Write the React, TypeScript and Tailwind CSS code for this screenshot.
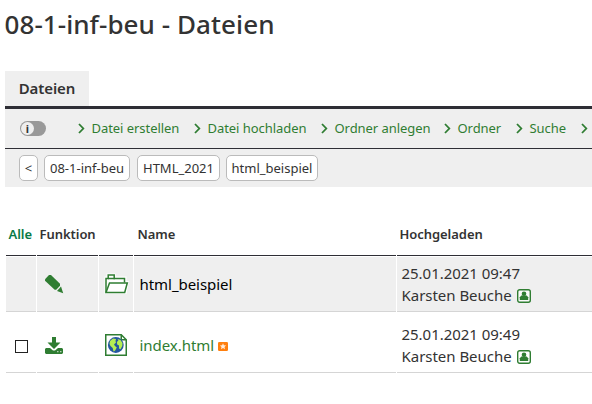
import type { ReactNode } from "react";

const Chevron = () => (
  <svg className="h-[11px] w-[7px] shrink-0" viewBox="0 0 7 11" fill="none" stroke="#2f7d32" strokeWidth="1.8">
    <path d="M1 1l4.3 4.5L1 10" />
  </svg>
);

const Pencil = () => (
  <svg className="h-[19px] w-[19px]" viewBox="0 0 19 19" fill="#2f7d32">
    <path d="M0 4.200L4 0h2L15 8.800v2L11.200 14.800h-1.500L0 5.800z" />
    <path d="M16 11.600l2.200 6.600-6.200-2.200z" />
  </svg>
);

const Download = () => (
  <svg className="h-[17px] w-[18px]" viewBox="0 0 18 17" fill="#2f7d32">
    <path d="M7 0h4v5.500h4.500L9 12 2.500 5.500H7z" />
    <path d="M1 11h4l3 2.500h2l3-2.500h4l1 1v4l-1 1H1l-1-1v-4z" />
    <path fill="#fff" d="M12 14h1.500v1.300H12zM15 14h1.500v1.300H15z" opacity=".65" />
  </svg>
);

const Folder = () => (
  <svg className="h-[22px] w-[25px]" viewBox="0 0 25 22">
    <path d="M.5 21V3.500h2V.5h9v3h11v4.500h2.500L22.500 21z" fill="#fff" />
    <path d="M2 19.500V5.500h2.200V2h6v3.500H20.500V9.500" fill="none" stroke="#2f7d32" strokeWidth="1.500" />
    <path d="M2 19.500L5.500 10H23.300L20.700 19.500zM4 5.500h7" fill="none" stroke="#2f7d32" strokeWidth="1.500" />
  </svg>
);

const Globe = () => (
  <svg className="h-[22px] w-[22px]" viewBox="0 0 22 22">
    <path d="M.75.75h15.500l5 5v15.500H.75z" fill="#fff" stroke="#2f7d32" strokeWidth="1.500" />
    <path d="M16.250.75v5h5" fill="none" stroke="#2f7d32" strokeWidth="1.500" />
    <circle cx="10.800" cy="11" r="7.900" fill="#2457a0" />
    <path d="M5 7l3-2.600 3 .6-.5 2 .5 1.500-2 2 1 1.500 1.800 1.500-1.800 3.200-1.500.8-.8-3.500L5.500 12l-1-2z" fill="#b5ee52" />
    <path d="M12.500 5l3 1 2 3-.2 3-1.800 3.200-1.500-.8v-3l-1.800-1-.3-2.500 1.500-1.300z" fill="#b5ee52" />
  </svg>
);

const Person = () => (
  <svg className="mt-[2px] h-[14px] w-[14px]" viewBox="0 0 14 14">
    <rect x=".7" y=".7" width="12.600" height="12.600" rx="2" fill="#fff" fillOpacity=".7" stroke="#2f7d32" strokeWidth="1.400" />
    <circle cx="7" cy="4.800" r="2.300" fill="#2f7d32" />
    <path d="M2.800 11V8.200l1.500-1.800h5.400l1.500 1.800V11z" fill="#2f7d32" />
  </svg>
);

const Star = () => (
  <svg className="mt-[2px] h-[9px] w-[10px]" viewBox="0 0 10 9">
    <rect width="10" height="9" rx="1.300" fill="#ff7f0e" />
    <path d="M5 1.300l.9 2 2.200.1-1.600 1.500.5 2.300-2-1.200-2 1.200.5-2.300-1.600-1.500 2.200-.1z" fill="#fff" fillOpacity=".85" />
  </svg>
);

const links = [
  { label: "Datei erstellen", width: "w-[116px]" },
  { label: "Datei hochladen", width: "w-[127px]" },
  { label: "Ordner anlegen", width: "w-[123px]" },
  { label: "Ordner", width: "w-[72px]" },
  { label: "Suche", width: "w-[65px]" },
  { label: "", width: "w-[8px]" },
];

const crumbs = [
  { label: "<", width: "w-[19px]" },
  { label: "08-1-inf-beu", width: "w-[86px]" },
  { label: "HTML_2021", width: "w-[83px]" },
  { label: "html_beispiel", width: "w-[92px]" },
];

const columns = "grid grid-cols-[30px_61px_34px_262px_195px] gap-x-px";

function Cell({ children, shaded, className = "" }: { children?: ReactNode; shaded?: boolean; className?: string }) {
  return (
    <div className={`flex items-center border-b border-[#d5d5d5] ${shaded ? "bg-[#efefef]" : ""} ${className}`}>
      {children}
    </div>
  );
}

function Row({ name, time, shaded }: { name: string; time: string; shaded?: boolean }) {
  return (
    <div className={`${columns} ${shaded ? "mt-px h-[55px]" : "h-[61px]"}`}>
      <Cell shaded={shaded} className="pl-[9px]">
        {!shaded && <input type="checkbox" aria-label={name} className="mt-[9px] h-[13px] w-[13px] appearance-none border border-[#222] bg-white" />}
      </Cell>
      <Cell shaded={shaded} className={shaded ? "pl-[8px]" : "pl-[8px] pt-[7px]"}>
        {shaded ? <Pencil /> : <Download />}
      </Cell>
      <Cell shaded={shaded} className={shaded ? "pl-[5px]" : "pl-[6px] pt-[6px]"}>
        {shaded ? <Folder /> : <Globe />}
      </Cell>
      <Cell shaded={shaded} className={`gap-[4px] pl-[5.500px] text-[15px] tracking-[-0.050px] ${shaded ? "pt-px text-black" : "pt-[7px] text-[#2f7d32]"}`}>
        <span>{name}</span>
        {!shaded && <Star />}
      </Cell>
      <Cell shaded={shaded} className={`pl-[4.500px] ${shaded ? "" : "pt-[6px]"}`}>
        <div className="text-[15px] leading-[22px] tracking-[-0.030px] text-[#333]">
          <div>{time}</div>
          <div className="flex items-center gap-[5px]">Karsten Beuche <Person /></div>
        </div>
      </Cell>
    </div>
  );
}

export default function App() {
  return (
    <div className="h-[404px] w-[592px] overflow-hidden whitespace-nowrap bg-white font-['Noto_Sans',sans-serif] text-[#333]">
      <h1 className="h-[71px] pl-[4.500px] pt-[6px] text-[26px] font-medium leading-[36px] tracking-[0.070px]">08-1-inf-beu - Dateien</h1>
      <div className="ml-[5px]">
        <div className="flex h-[35px] w-[84px] items-center justify-center bg-[#efefef] text-[15px] font-semibold tracking-[-0.100px]">Dateien</div>
        <nav className="flex h-[43px] items-center border-b border-t-[3px] border-[#2e2e35] bg-[#efefef] pl-[15px]">
          <span className="mr-[32px] flex h-[15px] w-[26px] items-center rounded-full bg-[#999] pl-px">
            <span className="flex h-[13px] w-[13px] items-center justify-center rounded-full bg-[#efefef] text-[11px] font-bold leading-none text-[#333]">i</span>
          </span>
          {links.map(({ label, width }, i) => (
            <a key={i} className={`flex shrink-0 items-center gap-[6.500px] text-[13px] tracking-[-0.050px] text-[#2f7d32] ${width}`}>
              <Chevron />
              {label}
            </a>
          ))}
        </nav>
        <div className="flex h-[38px] items-center bg-[#efefef] pl-[14px] text-[13px]">
          {crumbs.map(({ label, width }, i) => (
            <span key={label} className={`flex h-[26px] items-center justify-center rounded-[5px] border border-[#bbb] bg-white pt-px ${i === 2 ? "ml-[7px]" : i ? "ml-[6px]" : ""} ${width}`}>{label}</span>
          ))}
        </div>
      </div>
      <div className="ml-[6px] mt-[32px]">
        <div className={`${columns} h-[37px] text-[13px] font-semibold leading-[31px] tracking-[-0.050px]`}>
          <div className="border-b border-[#2e2e35] pl-[2.500px] text-[#087a46]">Alle</div>
          <div className="border-b border-[#2e2e35] pl-[2.500px]">Funktion</div>
          <div className="border-b border-[#2e2e35]" />
          <div className="border-b border-[#2e2e35] pl-[3.500px]">Name</div>
          <div className="border-b border-[#2e2e35] pl-[2.500px]">Hochgeladen</div>
        </div>
        <Row name="html_beispiel" time="25.01.2021 09:47" shaded />
        <Row name="index.html" time="25.01.2021 09:49" />
      </div>
    </div>
  );
}
